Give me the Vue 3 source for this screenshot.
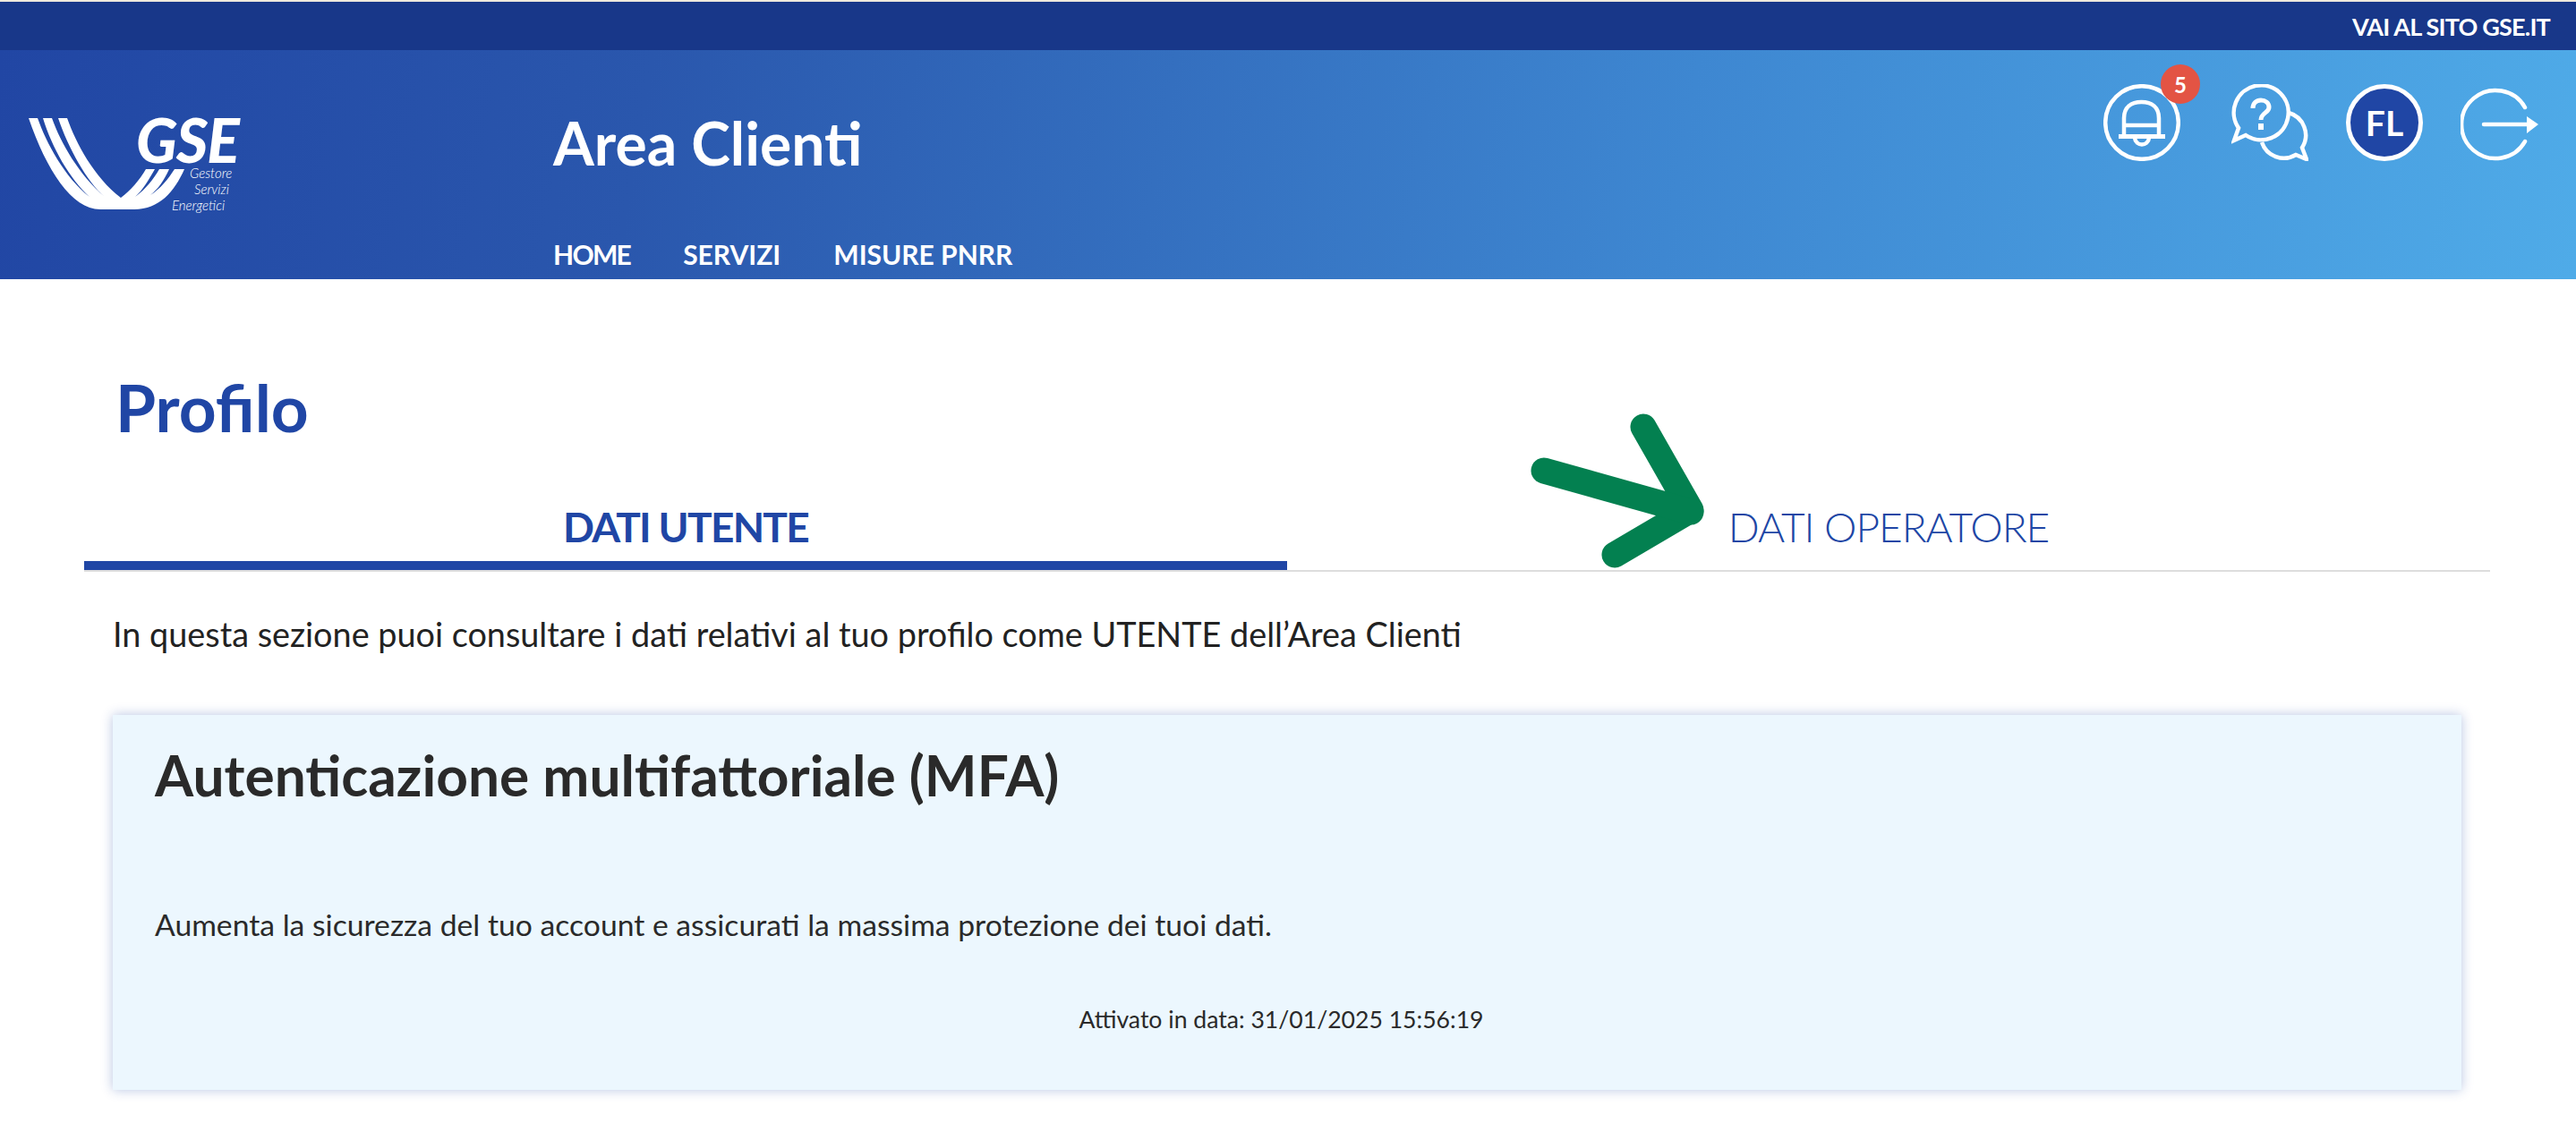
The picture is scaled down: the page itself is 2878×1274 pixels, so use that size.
<script setup>
const nav = ['HOME', 'SERVIZI', 'MISURE PNRR']
</script>

<template>
  <div class="page">
    <div class="strip"></div>
    <div class="topbar"><a class="gse-link">VAI AL SITO GSE.IT</a></div>
    <header class="header">
      <div class="logo">
        <svg class="logo-mark" viewBox="0 0 220 115" width="220" height="115">
          <path fill="#fff" transform="translate(-25,-125)" d="M32 132H42C52 160 72 198 100 220C78 200 58 165 48 132H58C68 160 88 195 117 220C97 203 76 165 65 132H75C85 160 105 198 135 221C146 213 156 201 163 189H173C166 201 160 212 151 220C162 212 171 201 178 189H189C183 202 177 211 168 218C179 211 188 200 195 189H206C195 214 178 234 150 234H112C80 234 52 190 32 132Z"/>
        </svg>
        <span class="gse">GSE</span>
        <span class="sub s1">Gestore</span>
        <span class="sub s2">Servizi</span>
        <span class="sub s3">Energetici</span>
      </div>
      <div class="title-col">
        <div class="app-title">Area Clienti</div>
        <nav class="nav"><a v-for="n in nav" :key="n">{{ n }}</a></nav>
      </div>
      <div class="icons">
        <div class="bell">
          <svg width="86" height="86" viewBox="0 0 86 86" fill="none" stroke="#fff" stroke-width="4.5">
            <circle cx="43" cy="43" r="40.8"/>
            <path d="M23 58V38C23 26 31 20 42.5 20S62 26 62 38V58"/>
            <path d="M23 46H62"/>
            <path d="M17 58.5H69" stroke-width="5"/>
            <path d="M35 60C36 70 50 70 51 60"/>
          </svg>
          <span class="badge">5</span>
        </div>
        <svg class="help" width="86" height="86" viewBox="0 0 86 86" fill="none" stroke="#fff" stroke-width="4.5">
          <path d="M16 57A30.5 30.5 0 1 0 8 49L3 63Z"/>
          <path d="M64 32A26 26 0 0 1 79 71L84 84L72 79A26 26 0 0 1 34 65"/>
          <path d="M24 27C24 21 28 18 33 18C38 18 42 21 42 26C42 32 33 32 33 40" stroke-width="5"/>
          <path d="M33 44V51" stroke-width="6"/>
        </svg>
        <div class="avatar">FL</div>
        <svg class="logout" width="87" height="86" viewBox="0 0 87 86" fill="none" stroke="#fff" stroke-width="4.5" stroke-linecap="round">
          <path d="M72 26A38 38 0 1 0 72 64"/>
          <path d="M26 45H76"/>
          <path d="M74 36L87 45L74 55Z" fill="#fff" stroke="none"/>
        </svg>
      </div>
    </header>

    <main class="main">
      <h1 class="h1">Profilo</h1>
      <div class="tabs">
        <div class="tab active">DATI UTENTE</div>
        <div class="tab">DATI OPERATORE</div>
        <svg class="arrow" width="210" height="180" viewBox="0 0 210 180" fill="none" stroke="#038050" stroke-width="29" stroke-linecap="round" stroke-linejoin="round">
          <path d="M131 17L184 110L99 160"/>
          <path d="M20 66L184 112"/>
        </svg>
      </div>
      <p class="intro">In questa sezione puoi consultare i dati relativi al tuo profilo come UTENTE dell’Area Clienti</p>
      <section class="card">
        <h2 class="card-title">Autenticazione multifattoriale (MFA)</h2>
        <p class="card-text">Aumenta la sicurezza del tuo account e assicurati la massima protezione dei tuoi dati.</p>
        <p class="card-date">Attivato in data: 31/01/2025 15:56:19</p>
      </section>
    </main>
  </div>
</template>

<style>
html, body { margin: 0; background: #fff; overflow: hidden; }
</style>

<style scoped>
.page { width: 2878px; height: 1274px; font-family: Lato, "Open Sans", sans-serif; color: #2a2a2a; overflow: hidden; }
.strip { height: 2px; background: #efe9dd; }
.topbar { height: 54px; background: #183789; display: flex; align-items: center; justify-content: flex-end; padding-right: 29px; }
.gse-link { color: #fff; font-weight: 700; font-size: 27px; letter-spacing: -0.8px; }
.header { height: 256px; background: linear-gradient(100deg, #2146a4 0%, #2a57ad 25%, #3e87d1 65%, #4fabe8 100%); display: flex; position: relative; color: #fff; }
.logo { width: 618px; flex: none; position: relative; }
.logo-mark { position: absolute; left: 25px; top: 69px; }
.gse { position: absolute; left: 152px; top: 72px; font-size: 68px; line-height: 56px; font-weight: 900; font-style: italic; letter-spacing: -1px; }
.sub { position: absolute; font-size: 15px; font-style: italic; font-weight: 300; line-height: 16px; }
.s1 { left: 212px; top: 129px; }
.s2 { left: 217px; top: 147px; }
.s3 { left: 192px; top: 165px; }
.title-col { flex: 1; }
.app-title { font-size: 66px; font-weight: 700; line-height: 80px; margin-top: 64px; }
.nav { display: flex; gap: 59px; margin-top: 66px; }
.nav a { font-size: 30px; font-weight: 700; line-height: 36px; }
.nav a:first-child { letter-spacing: -1.7px; }
.icons { display: flex; align-items: flex-start; gap: 42px; padding: 38px 42px 0 0; }
.help { margin-left: 15px; }
.bell { position: relative; width: 86px; height: 86px; }
.badge { position: absolute; left: 64px; top: -22px; width: 44px; height: 44px; border-radius: 50%; background: #e35444; font-size: 24px; font-weight: 700; display: flex; align-items: center; justify-content: center; }
.avatar { width: 86px; height: 86px; box-sizing: border-box; border: 5px solid #fff; border-radius: 50%; background: #2046a5; font-size: 39px; font-weight: 700; display: flex; align-items: center; justify-content: center; }
.main { padding: 0 96px 0 94px; }
.h1 { margin: 0; padding: 98px 0 0 35px; font-size: 73px; line-height: 90px; font-weight: 700; color: #2046a5; }
.tabs { position: relative; display: grid; grid-template-columns: 1fr 1fr; margin-top: 55px; border-bottom: 2px solid #ddd; }
.tab { text-align: center; font-size: 46px; line-height: 60px; height: 82px; padding-top: 4px; box-sizing: border-box; color: #2046a5; font-weight: 300; letter-spacing: -1px; }
.tab.active { font-weight: 700; letter-spacing: -1.7px; border-bottom: 10px solid #2046a5; }
.arrow { position: absolute; left: 1611px; top: -95px; }
.intro { margin: 45px 0 0 32px; font-size: 37.8px; line-height: 50px; font-weight: 400; color: #222; }
.card { margin: 65px 0 0 32px; width: 2624px; height: 419px; box-sizing: border-box; background: #ecf7fe; box-shadow: 0 0 12px rgba(32, 70, 165, .32); padding: 29px 47px; }
.card-title { margin: 0; font-size: 62.2px; line-height: 76px; font-weight: 700; }
.card-text { margin: 107px 0 0; font-size: 33.7px; line-height: 44px; font-weight: 400; }
.card-date { margin: 66px 0 0; padding-right: 13px; font-size: 26.6px; line-height: 36px; text-align: center; }
</style>
